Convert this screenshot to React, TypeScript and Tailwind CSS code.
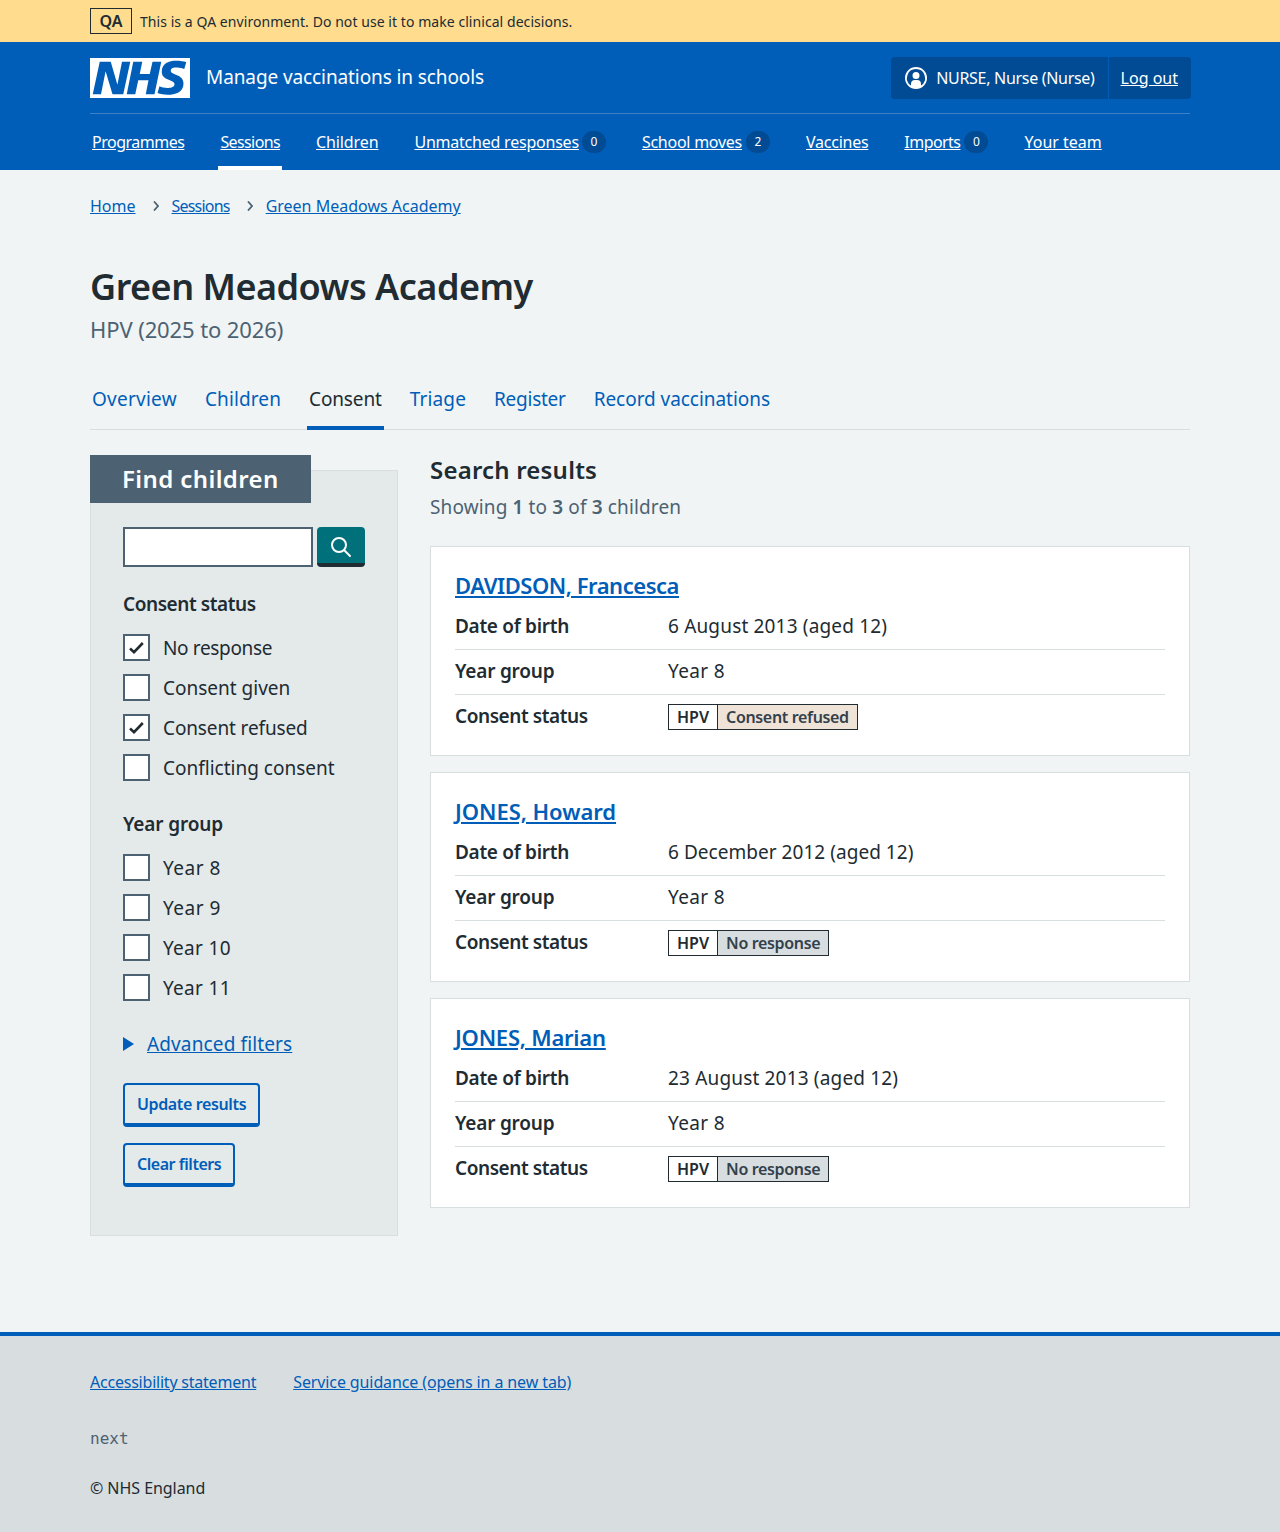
import type React from "react"

const nav = [
  { label: "Programmes", track: "tracking-[-0.5px]" },
  { label: "Sessions", active: true, track: "tracking-[-0.6px]" },
  { label: "Children", track: "tracking-[-0.12px]" },
  { label: "Unmatched responses", count: 0, gap: "ml-[3px]", track: "tracking-[-0.22px]" },
  { label: "School moves", count: 2, gap: "ml-[4px]", track: "tracking-[-0.25px]" },
  { label: "Vaccines", track: "tracking-[-0.25px]" },
  { label: "Imports", count: 0, gap: "ml-[4px]", track: "tracking-[-0.55px]" },
  { label: "Your team", track: "" },
]

const tabs = [
  { label: "Overview", track: "tracking-[0.25px]" },
  { label: "Children", track: "tracking-[0.12px]" },
  { label: "Consent", track: "tracking-[-0.14px]" },
  { label: "Triage", track: "tracking-[0.15px]" },
  { label: "Register", track: "tracking-[-0.25px]" },
  { label: "Record vaccinations", track: "tracking-[-0.05px]" },
]

const children = [
  { name: "DAVIDSON, Francesca", track: "tracking-[-0.47px]", dob: "6 August 2013 (aged 12)", dobTrack: "tracking-[0.17px]", status: "Consent refused", refused: true },
  { name: "JONES, Howard", track: "tracking-[-0.04px]", dob: "6 December 2012 (aged 12)", dobTrack: "tracking-[0.04px]", status: "No response", refused: false },
  { name: "JONES, Marian", track: "tracking-[-0.23px]", dob: "23 August 2013 (aged 12)", dobTrack: "tracking-[0.17px]", status: "No response", refused: false },
]

const Check: React.FC<{ label: string; checked?: boolean; track?: string }> = ({ label, checked, track = "" }) => (
  <div className="flex h-[40px] items-start">
    <div className="flex h-[27px] w-[27px] items-center justify-center border-2 border-[#4c6272] bg-white">
      {checked && (
        <svg viewBox="0 0 15 12" className="h-[12px] w-[15px]" fill="none" stroke="#212b32" strokeWidth="2.6">
          <path d="M1 6.5 5 10.2 13.8 1" />
        </svg>
      )}
    </div>
    <span className={`ml-[13px] text-[19px] leading-[28px] text-[#212b32] ${track}`}>{label}</span>
  </div>
)

const Row: React.FC<{ label: string; track: string; last?: boolean; children: React.ReactNode }> = ({ label, track, last, children }) => (
  <div className={`flex items-center ${last ? "pt-[7px]" : "h-[45px] border-b border-[#d8dde0] pb-[2px]"}`}>
    <div className={`w-[213px] text-[19px] font-semibold text-[#212b32] ${track} ${last ? "pb-[2px]" : ""}`}>{label}</div>
    <div className="text-[19px] text-[#212b32]">{children}</div>
  </div>
)

const Card: React.FC<{ name: string; track: string; dob: string; dobTrack: string; status: string; refused: boolean }> = ({ name, track, dob, dobTrack, status, refused }) => (
  <div className="h-[210px] border border-[#d8dde0] bg-white px-[24px] pt-[22px]">
    <a href="#" className={`mb-[4px] block text-[22px] leading-[32px] font-semibold text-[#005eb8] underline ${track}`}>
      <span>{name}</span>
    </a>
    <Row label="Date of birth" track="tracking-[-0.3px]">
      <span className={dobTrack}>{dob}</span>
    </Row>
    <Row label="Year group" track="tracking-[-0.2px]">
      <span className="tracking-[0.35px]">Year 8</span>
    </Row>
    <Row label="Consent status" track="tracking-[-0.43px]" last>
      <div className="flex h-[26px] border border-[#212b32] text-[16px] leading-[24px] font-semibold">
        <span className="border-r border-[#212b32] bg-white px-[8px] text-[#212b32]">HPV</span>
        <span className={`px-[8px] tracking-[-0.34px] ${refused ? "bg-[#efe2d6] text-[#33414b]" : "bg-[#d8dde0] text-[#33414b]"}`}>{status}</span>
      </div>
    </Row>
  </div>
)

const Chevron = () => (
  <svg viewBox="0 0 6 10" className="mt-[-1px] mr-[13px] ml-[17px] h-[10px] w-[6px]" fill="none" stroke="#4c6272" strokeWidth="1.8">
    <path d="M1 .5 5 5 1 9.5" />
  </svg>
)

export default function App() {
  return (
    <div className="min-h-[1532px] bg-[#f0f4f5] font-['Noto_Sans',sans-serif] text-[#212b32]">
      <div className="h-[42px] bg-[#ffdc8e]">
        <div className="mx-auto flex h-[42px] w-[1100px] items-center">
          <span className="flex h-[26px] w-[42px] items-center justify-center border border-[#212b32] text-[16px] font-semibold">QA</span>
          <span className="ml-[8px] text-[14px] tracking-[0.06px]">This is a QA environment. Do not use it to make clinical decisions.</span>
        </div>
      </div>

      <header className="h-[128px] bg-[#005eb8] text-white">
        <div className="mx-auto w-[1100px]">
          <div className="flex h-[72px] items-center justify-between border-b border-[#3f7fc6]">
            <div className="flex items-center">
              <svg viewBox="0 0 40 16" className="h-[40px] w-[100px]">
                <path fill="#fff" d="M0 0h40v16H0z" />
                <path fill="#005eb8" d="M3.9 1.5h4.4l2.6 9h.1l1.8-9h3.3l-2.8 13H9l-2.7-9h-.1l-1.8 9H1.1zM17.3 1.5h3.6l-1 4.9h4L25 1.5h3.5l-2.7 13h-3.5l1.1-5.6h-4.1l-1.2 5.6h-3.4zM37.7 4.4c-.7-.3-1.6-.6-2.9-.6-1.4 0-2.5.2-2.5 1.3 0 1.8 5.1 1.2 5.1 5.1 0 3.6-3.3 4.5-6.4 4.5-1.3 0-2.9-.3-4-.7l.8-2.7c.7.4 2.1.7 3.2.7s2.8-.2 2.8-1.5c0-2.1-5.1-1.3-5.1-5 0-3.4 2.9-4.4 5.8-4.4 1.6 0 3.1.2 4 .6z" />
              </svg>
              <span className="ml-[16px] text-[19px] tracking-[-0.1px]">Manage vaccinations in schools</span>
            </div>
            <div className="-mr-[1px] flex h-[42px] items-center rounded-[4px] bg-[#004b93] text-[16px]">
              <div className="flex h-full items-center border-r border-[#005eb8] pr-[13px] pl-[13px]">
                <svg viewBox="0 0 24 24" className="h-[24px] w-[24px]" fill="currentColor">
                  <path fillRule="evenodd" d="M12 1a11 11 0 1 1 0 22 11 11 0 0 1 0-22Zm0 2a9 9 0 0 0-5 16.5V18a4 4 0 0 1 4-4h2a4 4 0 0 1 4 4v1.5A9 9 0 0 0 12 3Zm0 3a3.5 3.5 0 1 1 0 7 3.5 3.5 0 0 1 0-7Z" />
                </svg>
                <span className="ml-[8px] tracking-[-0.3px]">NURSE, Nurse (Nurse)</span>
              </div>
              <a href="#" className="pr-[13px] pl-[12px] underline">Log out</a>
            </div>
          </div>
          <nav className="flex h-[56px] items-stretch gap-[32px]">
            {nav.map((n) => (
              <div key={n.label} className={`flex items-center border-b-4 px-[2px] pt-[4px] ${n.active ? "border-white" : "border-transparent"}`}>
                <a href="#" className={`text-[16px] underline ${n.track}`}>{n.label}</a>
                {n.count !== undefined && (
                  <span className={`${n.gap} flex h-[22px] w-[24px] items-center justify-center rounded-full bg-[#004b93] text-[12px]`}>{n.count}</span>
                )}
              </div>
            ))}
          </nav>
        </div>
      </header>

      <main className="mx-auto w-[1100px]">
        <div className="flex h-[72px] items-center text-[16px] text-[#005eb8]">
          <a href="#" className="underline">Home</a>
          <Chevron />
          <a href="#" className="tracking-[-0.8px] underline">Sessions</a>
          <Chevron />
          <a href="#" className="underline">Green Meadows Academy</a>
        </div>

        <h1 className="mt-[20px] text-[36px] leading-[50px] font-semibold tracking-[-0.5px]">Green Meadows Academy</h1>
        <p className="-mt-[1px] text-[22px] leading-[36px] tracking-[-0.1px] text-[#4c6272]">HPV (2025 to 2026)</p>

        <div className="mt-[19px] flex h-[64px] gap-[24px] border-b border-[#d8dde0]">
          {tabs.map((t) => (
            <div key={t.label} className={`-mb-[1px] flex items-center border-b-4 px-[2px] pt-[6px] text-[19px] ${t.track} ${t.label === "Consent" ? "border-[#005eb8] text-[#212b32]" : "border-transparent text-[#005eb8]"}`}>
              {t.label}
            </div>
          ))}
        </div>

        <div className="mt-[25px] flex items-start gap-[32px]">
          <aside className="mt-[15px] h-[766px] w-[308px] border border-[#d8dde0] bg-[#e4e9ea]">
            <div className="-mt-[16px] -ml-[1px] flex h-[48px] w-[221px] items-center bg-[#4c6272] pl-[32px] text-[24px] font-semibold tracking-[0.4px] text-white">Find children</div>
            <div className="px-[32px] pt-[24px]">
              <div className="flex gap-[4px]">
                <div className="h-[40px] w-[190px] border-2 border-[#4c6272] bg-white" />
                <button className="flex h-[40px] w-[48px] items-center justify-center rounded-[4px] border-b-4 border-[#212b32] bg-[#00707a] text-white">
                  <svg viewBox="0 0 24 24" className="mt-[4px] h-[24px] w-[24px]" fill="none" stroke="currentColor" strokeWidth="2">
                    <circle cx="10" cy="10" r="7" />
                    <path d="m15 15 6 6" strokeLinecap="round" />
                  </svg>
                </button>
              </div>
              <h3 className="mt-[23px] mb-[16px] text-[19px] leading-[28px] font-semibold tracking-[-0.43px]">Consent status</h3>
              <Check label="No response" checked track="tracking-[-0.35px]" />
              <Check label="Consent given" />
              <Check label="Consent refused" checked track="tracking-[-0.13px]" />
              <Check label="Conflicting consent" />
              <h3 className="mt-[16px] mb-[16px] text-[19px] leading-[28px] font-semibold tracking-[-0.15px]">Year group</h3>
              <Check label="Year 8" track="tracking-[0.5px]" />
              <Check label="Year 9" track="tracking-[0.5px]" />
              <Check label="Year 10" track="tracking-[0.3px]" />
              <Check label="Year 11" track="tracking-[0.3px]" />
              <div className="mt-[16px] flex h-[28px] items-center">
                <svg viewBox="0 0 11 14" className="h-[14px] w-[11px]" fill="#005eb8"><path d="M0 0 11 7 0 14z" /></svg>
                <a href="#" className="ml-[13px] text-[19px] tracking-[0.13px] text-[#005eb8] underline">Advanced filters</a>
              </div>
              <button className="mt-[25px] block h-[44px] rounded-[4px] border-2 border-b-4 border-[#005eb8] px-[12px] text-[16px] font-semibold tracking-[-0.37px] text-[#005eb8]">Update results</button>
              <button className="mt-[16px] block h-[44px] rounded-[4px] border-2 border-b-4 border-[#005eb8] px-[12px] text-[16px] font-semibold tracking-[-0.46px] text-[#005eb8]">Clear filters</button>
            </div>
          </aside>

          <section className="flex-1">
            <h2 className="mt-[-2px] text-[24px] leading-[34px] font-semibold tracking-[0.2px]">Search results</h2>
            <p className="mt-[6px] mb-[25px] text-[19px] leading-[28px] tracking-[0.13px] text-[#4c6272]">
              Showing <b className="font-semibold">1</b> to <b className="font-semibold">3</b> of <b className="font-semibold">3</b> children
            </p>
            <div className="flex flex-col gap-[16px]">
              {children.map((c) => (
                <Card key={c.name} {...c} />
              ))}
            </div>
          </section>
        </div>
      </main>

      <footer className="mt-[96px] h-[200px] border-t-4 border-[#005eb8] bg-[#d8dde0]">
        <div className="mx-auto w-[1100px] pt-[34px]">
          <div className="flex gap-[37px] text-[16px] leading-[24px] text-[#005eb8]">
            <a href="#" className="tracking-[-0.22px] underline">Accessibility statement</a>
            <a href="#" className="tracking-[-0.11px] underline">Service guidance (opens in a new tab)</a>
          </div>
          <p className="mt-[33px] font-['DejaVu_Sans_Mono',monospace] text-[16px] leading-[24px] text-[#4c6272]">next</p>
          <p className="mt-[25px] text-[16px] leading-[24px] tracking-[-0.05px]">© NHS England</p>
        </div>
      </footer>
    </div>
  )
}
